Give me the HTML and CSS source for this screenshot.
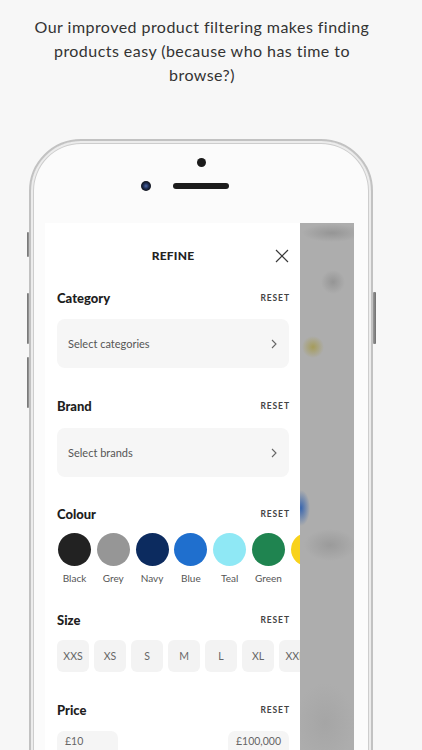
FILE: index.html
```html
<!DOCTYPE html>
<html>
<head>
<meta charset="utf-8">
<link rel="stylesheet" href="styles.css">
</head>
<body>
<p class="caption">Our improved product filtering makes finding<br>products easy (because who has time to<br>browse?)</p>
<div class="phone">
  <span class="side-btn btn-l1"></span>
  <span class="side-btn btn-l2"></span>
  <span class="side-btn btn-l3"></span>
  <span class="side-btn btn-r1"></span>
  <div class="bezel-top">
    <span class="sensor"></span>
    <div class="ear-row">
      <span class="cam"></span>
      <span class="speaker"></span>
      <span></span>
    </div>
  </div>
  <div class="screen">
    <div class="drawer">
      <div class="drawer-head">
        <span class="drawer-title">REFINE</span>
        <svg class="close" viewBox="0 0 14 14"><path d="M1 1L13 13M13 1L1 13" stroke="#3a3a3a" stroke-width="1.2" fill="none"/></svg>
      </div>

      <section class="sec sec-cat">
        <div class="sec-head"><h2>Category</h2><span class="reset">RESET</span></div>
        <div class="select"><span>Select categories</span><svg class="chev" viewBox="0 0 6 10"><path d="M1 1l4 4-4 4" stroke="#666" stroke-width="1.1" fill="none"/></svg></div>
      </section>

      <section class="sec sec-brand">
        <div class="sec-head"><h2>Brand</h2><span class="reset">RESET</span></div>
        <div class="select select-brand"><span>Select brands</span><svg class="chev" viewBox="0 0 6 10"><path d="M1 1l4 4-4 4" stroke="#666" stroke-width="1.1" fill="none"/></svg></div>
      </section>

      <section class="sec sec-colour">
        <div class="sec-head"><h2>Colour</h2><span class="reset">RESET</span></div>
        <div class="swatches">
          <div class="swatch"><span class="dot c-black"></span><span class="sw-label">Black</span></div>
          <div class="swatch"><span class="dot c-grey"></span><span class="sw-label">Grey</span></div>
          <div class="swatch"><span class="dot c-navy"></span><span class="sw-label">Navy</span></div>
          <div class="swatch"><span class="dot c-blue"></span><span class="sw-label">Blue</span></div>
          <div class="swatch"><span class="dot c-teal"></span><span class="sw-label">Teal</span></div>
          <div class="swatch"><span class="dot c-green"></span><span class="sw-label">Green</span></div>
          <div class="swatch"><span class="dot c-yellow"></span></div>
        </div>
      </section>

      <section class="sec sec-size">
        <div class="sec-head"><h2>Size</h2><span class="reset">RESET</span></div>
        <div class="sizes">
          <span class="size">XXS</span>
          <span class="size">XS</span>
          <span class="size">S</span>
          <span class="size">M</span>
          <span class="size">L</span>
          <span class="size">XL</span>
          <span class="size">XXL</span>
        </div>
      </section>

      <section class="sec sec-price">
        <div class="sec-head"><h2>Price</h2><span class="reset">RESET</span></div>
        <div class="prices">
          <span class="price">£10</span>
          <span class="price">£100,000</span>
        </div>
      </section>
    </div>
    <div class="backdrop"></div>
  </div>
</div>
</body>
</html>
```

FILE: styles.css
```css
html, body {
  margin: 0;
  padding: 0;
}
body {
  width: 422px;
  height: 750px;
  overflow: hidden;
  background: #f7f7f7;
  font-family: Lato, "Liberation Sans", sans-serif;
}
.caption {
  margin: 0;
  padding: 15px 18px 0 0;
  text-align: center;
  font-size: 16px;
  line-height: 24px;
  color: #333;
  letter-spacing: 0.45px;
}
.phone {
  position: relative;
  margin: 52px 0 0 29px;
  width: 344px;
  height: 720px;
  box-sizing: border-box;
  border: 2px solid #c2c2c2;
  border-radius: 52px;
  background: #fbfbfb;
  box-shadow: inset 0 0 0 2px #ececec, inset 0 0 0 3px #cdcdcd;
}
.side-btn {
  position: absolute;
  width: 2.5px;
  background: linear-gradient(90deg, #6f6f6f, #9a9a9a);
  border-radius: 1px;
}
.btn-l1 { left: -4.5px; top: 91px; height: 25px; }
.btn-l2 { left: -4.5px; top: 152px; height: 51px; }
.btn-l3 { left: -4.5px; top: 216px; height: 51px; }
.btn-r1 { right: -4.5px; top: 151px; height: 52px; background: linear-gradient(90deg, #9a9a9a, #6f6f6f); }

.bezel-top {
  height: 82px;
  padding-top: 17px;
  box-sizing: border-box;
  display: flex;
  flex-direction: column;
  align-items: center;
}
.sensor {
  width: 9px;
  height: 9px;
  border-radius: 50%;
  background: #1b1b1b;
  margin-bottom: 14px;
}
.ear-row {
  width: 100%;
  height: 10px;
  display: grid;
  grid-template-columns: 1fr auto 1fr;
  align-items: center;
}
.cam {
  justify-self: end;
  margin-right: 22px;
  width: 10px;
  height: 10px;
  border-radius: 50%;
  background: radial-gradient(circle at 50% 50%, #4a66a8 0, #1d2b4d 40%, #0d0d10 75%);
}
.speaker {
  width: 56px;
  height: 6px;
  border-radius: 3px;
  background: #1c1c1c;
}

.screen {
  margin-left: 14px;
  width: 309px;
  height: 620px;
  display: flex;
  background: #fff;
  overflow: hidden;
}
.drawer {
  flex: none;
  width: 255px;
  box-sizing: border-box;
  padding: 0 11px 0 12px;
  background: #fff;
  overflow: hidden;
  color: #222;
}
.backdrop {
  flex: 1;
  background:
    radial-gradient(ellipse 30px 9px at 32px 10px, rgba(130,130,130,0.55), rgba(130,130,130,0)),
    radial-gradient(circle 12px at 33px 59px, rgba(145,145,145,0.85), rgba(145,145,145,0)),
    radial-gradient(circle 11px at 13px 124px, rgba(165,155,85,0.95), rgba(165,155,85,0)),
    radial-gradient(ellipse 9px 18px at 1px 285px, rgba(45,95,175,0.9), rgba(45,95,175,0)),
    radial-gradient(ellipse 26px 16px at 30px 322px, rgba(150,150,150,0.8), rgba(150,150,150,0)),
    radial-gradient(ellipse 30px 40px at 25px 500px, rgba(160,160,160,0.6), rgba(160,160,160,0)),
    #adadad;
}

.drawer-head {
  height: 65px;
  display: grid;
  grid-template-columns: 1fr auto 1fr;
  align-items: center;
}
.drawer-title {
  grid-column: 2;
  font-size: 12px;
  font-weight: 900;
  letter-spacing: 0.2px;
  color: #222;
}
.close {
  grid-column: 3;
  justify-self: end;
  width: 14px;
  height: 14px;
}

.sec-head {
  height: 20px;
  display: flex;
  justify-content: space-between;
  align-items: center;
}
.sec-head h2 {
  margin: 0;
  font-size: 13px;
  font-weight: 900;
  color: #1e1e1e;
}
.reset {
  font-size: 8.5px;
  font-weight: 700;
  letter-spacing: 0.9px;
  margin-right: -0.9px;
  color: #444;
}

.select {
  margin-top: 11px;
  height: 49px;
  box-sizing: border-box;
  border-radius: 8px;
  background: #f6f6f6;
  display: flex;
  align-items: center;
  justify-content: space-between;
  padding: 0 12px 0 11px;
  font-size: 11px;
  color: #555;
}
.select-brand { margin-top: 12px; }
.chev {
  width: 6px;
  height: 10px;
}

.sec-cat { margin-bottom: 28px; }
.sec-brand { margin-bottom: 27px; }
.sec-colour { margin-bottom: 25px; }
.sec-size { margin-bottom: 28px; }

.swatches {
  margin-top: 9px;
  margin-left: 1px;
  display: flex;
  gap: 5.8px;
}
.swatch {
  flex: none;
  width: 33px;
  display: flex;
  flex-direction: column;
  align-items: center;
}
.dot {
  width: 33px;
  height: 33px;
  border-radius: 50%;
}
.sw-label {
  margin-top: 5px;
  font-size: 10px;
  line-height: 14px;
  color: #555;
}
.c-black { background: #222222; }
.c-grey { background: #969696; }
.c-navy { background: #0c2b5f; }
.c-blue { background: #1f6fce; }
.c-teal { background: #8fe8f5; }
.c-green { background: #1f8450; }
.c-yellow { background: #f8d21c; }

.sizes {
  margin-top: 10px;
  display: flex;
  gap: 5px;
}
.size {
  flex: none;
  width: 32px;
  height: 32px;
  border-radius: 6px;
  background: #f3f3f3;
  display: flex;
  align-items: center;
  justify-content: center;
  font-size: 10.5px;
  color: #666;
}

.prices {
  margin-top: 11px;
  display: flex;
  justify-content: space-between;
}
.price {
  width: 61px;
  height: 28px;
  box-sizing: border-box;
  border-radius: 7px;
  background: #f5f5f5;
  padding: 3px 0 0 8px;
  font-size: 10.5px;
  line-height: 14px;
  color: #666;
}
```
